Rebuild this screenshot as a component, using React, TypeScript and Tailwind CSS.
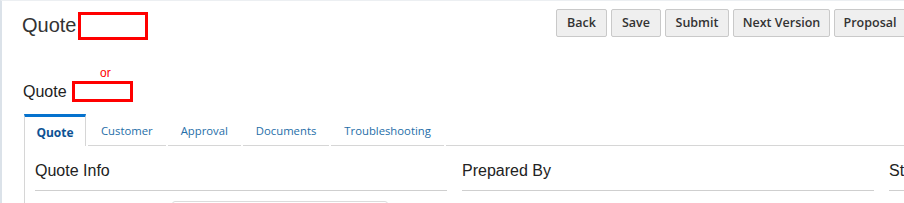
import React from "react";

const BUTTONS = [
  { label: "Back", width: "w-[51px]" },
  { label: "Save", width: "w-[50px]" },
  { label: "Submit", width: "w-[64px]" },
  { label: "Next Version", width: "w-[97px]" },
  { label: "Proposal", width: "w-[72px]" },
];

const TABS = ["Customer", "Approval", "Documents", "Troubleshooting"];

const SECTIONS = ["Quote Info", "Prepared By", "Status"];

export default function App() {
  return (
    <div className="h-[203px] w-[904px] overflow-hidden border-t border-l-2 border-t-[#eceff2] border-l-[#dbe2e9] bg-white font-['Liberation_Sans',Arial,sans-serif] text-[#333]">
      <div className="flex items-start pt-[8px] pl-[20px]">
        <div className="flex items-start pt-[3px]">
          <span className="text-[20px] leading-[26px] text-[#333]">Quote</span>
          <span className="ml-[2px] h-[28px] w-[70px] border-[3px] border-[#ff0000]" />
        </div>
        <div className="ml-auto mr-[-2px] flex gap-[4px] font-['Open_Sans',sans-serif] text-[12.5px] font-semibold text-[#333]">
          {BUTTONS.map((b) => (
            <button
              key={b.label}
              className={`h-[28px] ${b.width} rounded-[2px] border border-[#c9c9c9] bg-[#efefef]`}
            >
              {b.label}
            </button>
          ))}
        </div>
      </div>

      <div className="mt-[26px] pl-[98px] text-[12px] leading-[14px] text-[#ff0000]">or</div>

      <div className="mt-[1px] flex items-center gap-[5px] pl-[21px]">
        <span className="text-[16px] leading-[20px] text-[#222]">Quote</span>
        <span className="h-[21px] w-[61px] border-[3px] border-[#ff0000]" />
      </div>

      <div className="mt-[12px] flex pl-[22px] font-['Open_Sans',sans-serif] text-[11.3px]">
        <div className="flex h-[32px] w-[62px] items-center justify-center border-x border-t-[3px] border-x-[#d6d6d6] border-t-[#0572ce] bg-white pt-[2px] text-[12px] font-bold text-[#0e5394]">
          Quote
        </div>
        {TABS.map((t) => (
          <div
            key={t}
            className="ml-[2px] flex h-[32px] items-center border-b border-[#d6d6d6] px-[13px] pt-[4px] text-[#256ea8]"
          >
            {t}
          </div>
        ))}
        <div className="ml-[2px] flex-1 border-b border-[#d6d6d6]" />
      </div>

      <div className="ml-[22px] h-[60px] border-l border-[#d6d6d6] pl-[10px]">
        <div className="grid grid-cols-[412px_412px_412px] gap-[15px] pt-[15px]">
          {SECTIONS.map((s) => (
            <div key={s} className="border-b border-[#cfcfcf] pb-[9px] text-[16px] leading-[20px] text-[#222]">
              {s}
            </div>
          ))}
        </div>
        <div className="mt-[10px] ml-[137px] h-[20px] w-[216px] rounded-[3px] border border-[#dcdcdc]" />
      </div>
    </div>
  );
}
